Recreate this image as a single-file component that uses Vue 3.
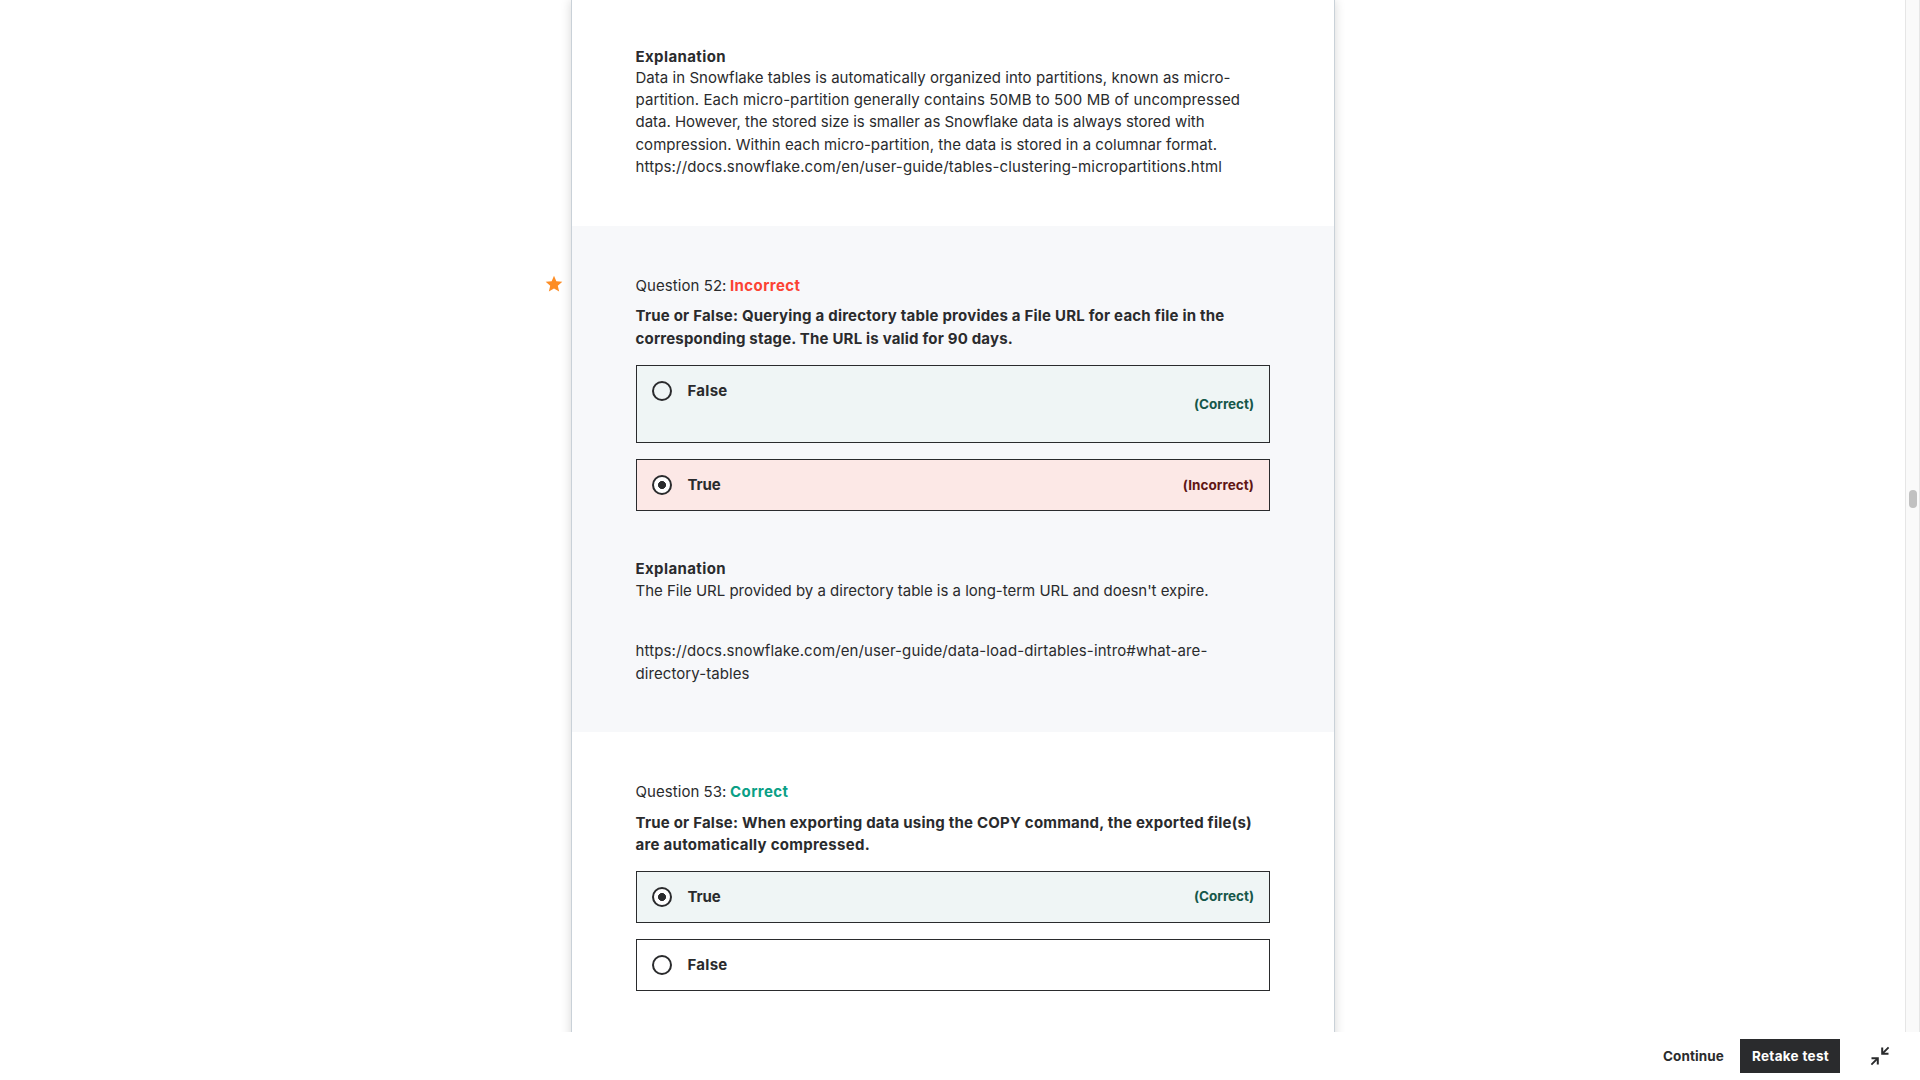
<script setup>
// v-fit spreads the letters of a line so that it takes the given width
const vFit = {
  mounted(el, { value }) {
    const natural = el.getBoundingClientRect().width
    const count = el.textContent.trim().length
    el.style.letterSpacing = `${(value - natural) / count}px`
  },
}

const firstExplanation = [
  ['Data in Snowflake tables is automatically organized into partitions, known as micro-', 595],
  ['partition. Each micro-partition generally contains 50MB to 500 MB of uncompressed', 604.5],
  ['data. However, the stored size is smaller as Snowflake data is always stored with', 569],
  ['compression. Within each micro-partition, the data is stored in a columnar format.', 581.5],
  ['https://docs.snowflake.com/en/user-guide/tables-clustering-micropartitions.html', 586.5],
]

const questions = [
  {
    number: 52,
    starred: true,
    shaded: true,
    status: 'Incorrect',
    statusWidth: 70.5,
    title: [
      ['True or False: Querying a directory table provides a File URL for each file in the', 589],
      ['corresponding stage. The URL is valid for 90 days.', 377.5],
    ],
    answers: [
      { text: 'False', width: 40, tone: 'right', tall: true, note: '(Correct)', noteWidth: 60 },
      { text: 'True', width: 33, tone: 'wrong', checked: true, note: '(Incorrect)', noteWidth: 71 },
    ],
    explanation: [
      [["The File URL provided by a directory table is a long-term URL and doesn't expire.", 573]],
      [
        ['https://docs.snowflake.com/en/user-guide/data-load-dirtables-intro#what-are-', 572],
        ['directory-tables', 114],
      ],
    ],
  },
  {
    number: 53,
    status: 'Correct',
    statusWidth: 58.5,
    title: [
      ['True or False: When exporting data using the COPY command, the exported file(s)', 616.5],
      ['are automatically compressed.', 234.5],
    ],
    answers: [
      { text: 'True', width: 33, tone: 'right', checked: true, note: '(Correct)', noteWidth: 60 },
      { text: 'False', width: 40 },
    ],
  },
]
</script>

<template>
  <div class="page">
    <div class="viewport">
      <main class="sheet">
        <section class="lead">
          <div class="heading"><span v-fit="90.5">Explanation</span></div>
          <p class="copy">
            <span v-for="[t, w] in firstExplanation" :key="t" class="line"><span v-fit="w">{{ t }}</span></span>
          </p>
        </section>

        <section v-for="q in questions" :key="q.number" class="question" :class="{ shaded: q.shaded }">
          <svg v-if="q.starred" class="star" viewBox="0 0 24 24" width="20" height="20">
            <path d="M12 17.27 18.18 21l-1.64-7.03L22 9.24l-7.19-.61L12 2 9.19 8.63 2 9.24l5.46 4.73L5.82 21z" />
          </svg>
          <div class="status">
            <span v-fit="91">Question {{ q.number }}:</span>
            <b v-fit="q.statusWidth" :class="q.status.toLowerCase()">{{ q.status }}</b>
          </div>
          <h2 class="title">
            <span v-for="[t, w] in q.title" :key="t" class="line"><span v-fit="w">{{ t }}</span></span>
          </h2>
          <ul class="answers">
            <li v-for="a in q.answers" :key="a.text" class="answer" :class="[a.tone, { tall: a.tall }]">
              <i class="radio" :class="{ checked: a.checked }"></i>
              <span class="label"><span v-fit="a.width">{{ a.text }}</span></span>
              <span v-if="a.note" class="note"><span v-fit="a.noteWidth">{{ a.note }}</span></span>
            </li>
          </ul>
          <div v-if="q.explanation" class="details">
            <div class="heading"><span v-fit="90.5">Explanation</span></div>
            <p v-for="(para, i) in q.explanation" :key="i" class="copy">
              <span v-for="[t, w] in para" :key="t" class="line"><span v-fit="w">{{ t }}</span></span>
            </p>
          </div>
        </section>
      </main>
      <div class="track"><div class="thumb"></div></div>
    </div>

    <footer class="bar">
      <button class="continue"><span v-fit="61">Continue</span></button>
      <button class="retake"><span v-fit="77">Retake test</span></button>
      <svg class="shrink" viewBox="0 0 20 20" width="20" height="20">
        <path class="shaft" d="M18.6 1.4 12.5 7.5M1.4 18.6 7.5 12.5" />
        <path d="M12.2 1.5v6.3h6.3M7.8 18.5v-6.3H1.5" />
      </svg>
    </footer>
  </div>
</template>

<style>
body {
  margin: 0;
  overflow: hidden;
}
</style>

<style scoped>
.page {
  display: flex;
  flex-direction: column;
  width: 1920px;
  height: 1080px;
  overflow: hidden;
  background: #fff;
  color: #2a2b2d;
  font: 15px/22.4px Inter, "Liberation Sans", sans-serif;
}
.viewport {
  display: flex;
  justify-content: space-between;
  height: 1032px;
  overflow: hidden;
}
.sheet {
  box-sizing: border-box;
  width: 764px;
  height: 1100px;
  margin-left: 571px;
  border: solid #c9d1d8;
  border-width: 0 1px;
  box-shadow: 0 0 10px rgba(0, 0, 0, 0.16);
}
.lead {
  box-sizing: border-box;
  height: 226px;
  padding: 46px 64px 0;
}
.heading {
  height: 20.65px;
  margin-left: -0.5px;
  line-height: 21px;
  font-weight: 700;
}
.copy {
  margin: 0;
}
.line {
  display: block;
  margin-left: -0.5px;
  white-space: nowrap;
}
.question {
  position: relative;
  box-sizing: border-box;
  padding: 49.4px 64px 0;
}
.question.shaded {
  height: 506px;
  padding-top: 49px;
  background: #f7f8fa;
}
.star {
  position: absolute;
  left: -28px;
  top: 48px;
  fill: #fd8d25;
}
.status {
  display: flex;
  gap: 3.5px;
  height: 30.3px;
  margin-left: -0.5px;
  white-space: nowrap;
}
.incorrect {
  color: #fc4233;
}
.correct {
  color: #0a9f86;
}
.title {
  margin: 0 0 14.5px;
  font-size: 15px;
  font-weight: 700;
}
.shaded .title {
  margin-bottom: 14.9px;
}
.answers {
  display: flex;
  flex-direction: column;
  gap: 16px;
  margin: 0;
  padding: 0;
  list-style: none;
}
.answer {
  box-sizing: border-box;
  display: flex;
  align-items: flex-start;
  height: 52px;
  padding: 15px 15px 0;
  border: 1px solid #2a2b2d;
  font-weight: 700;
}
.answer.tall {
  height: 78px;
}
.right {
  background: #eff5f5;
}
.wrong {
  background: #fce8e6;
}
.radio {
  box-sizing: border-box;
  display: flex;
  flex: none;
  width: 20px;
  height: 20px;
  border: 2px solid #2a2b2d;
  border-radius: 50%;
}
.radio.checked {
  background: radial-gradient(circle, #2a2b2d 3.7px, #fff 4.3px);
}
.label {
  flex: 1;
  margin-left: 15.5px;
  line-height: 20px;
}
.note {
  font-size: 13.5px;
  line-height: 20px;
}
.right .note {
  margin-top: -1px;
  color: #165749;
}
.tall .note {
  margin-top: 13px;
}
.wrong .note {
  color: #5f1614;
}
.details {
  padding-top: 47px;
}
.details .heading {
  height: 22px;
}
.details .copy + .copy {
  margin-top: 38px;
}
.track {
  box-sizing: border-box;
  width: 15px;
  padding: 490px 0 0 3px;
  border: solid #e6e6e6;
  border-width: 0 1px;
  background: #fafafa;
}
.thumb {
  width: 8px;
  height: 18px;
  border-radius: 4px;
  background: #c1c1c1;
}
.bar {
  display: flex;
  align-items: center;
  justify-content: flex-end;
  box-sizing: border-box;
  height: 48px;
  padding: 0 30px 0 0;
}
.bar button {
  box-sizing: border-box;
  height: 34px;
  padding: 0;
  border: 0;
  background: none;
  color: #2a2b2d;
  font: 700 13.5px/34px Inter, "Liberation Sans", sans-serif;
  white-space: nowrap;
}
.bar .continue {
  margin-right: 16px;
}
.bar .retake {
  width: 100px;
  padding-left: 1px;
  background: #2a2b2d;
  color: #fff;
}
.shrink {
  margin-left: 30px;
  fill: none;
  stroke: #2a2b2d;
  stroke-width: 2;
}
.shaft {
  stroke-width: 1.8;
}
</style>
